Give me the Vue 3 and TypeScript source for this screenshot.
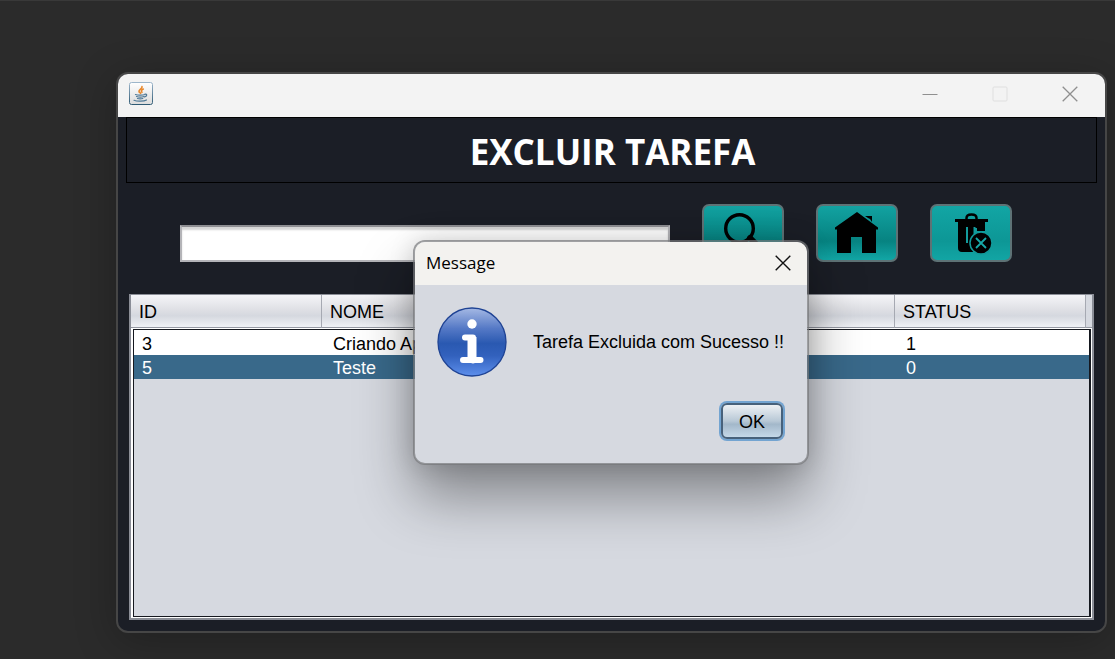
<script setup lang="ts">
import { ref } from 'vue'

interface Task {
  id: number
  nome: string
  status: number
}

const search = ref('')
const selectedId = ref(5)
const columns = ['ID', 'NOME', '', '', 'STATUS']
const tasks: Task[] = [
  { id: 3, nome: 'Criando App', status: 1 },
  { id: 5, nome: 'Teste', status: 0 },
]
</script>

<template>
  <div class="desktop">
    <main class="window">
      <header class="titlebar">
        <svg class="java" viewBox="0 0 24 24" aria-hidden="true">
          <defs>
            <linearGradient id="javaBg" x1="0" y1="0" x2="0" y2="1">
              <stop offset="0" stop-color="#ffffff" />
              <stop offset="1" stop-color="#dcdcdc" />
            </linearGradient>
            <linearGradient id="javaEdge" x1="0" y1="0" x2="0" y2="1">
              <stop offset="0" stop-color="#9db6cb" />
              <stop offset="1" stop-color="#2f5a74" />
            </linearGradient>
          </defs>
          <rect x="0.5" y="0.5" width="23" height="22" rx="2" fill="url(#javaBg)" stroke="url(#javaEdge)" />
          <g fill="none" stroke-linecap="round">
            <path d="M13 4.500c.8 2.200-3.500 3-3 5 .2 1 1.300 1.200 1.600 1.800M14.300 7c-1.500.6-2.600 1.800-1.300 3.200" stroke="#e8872b" stroke-width="1.600" />
            <path d="M6.500 12.500c2 .8 7.500.7 9.500 0M16 12c2.500-.3 2.200 2.300-.5 3M7.500 14.500c2 .6 5.500.6 7.500 0M8.500 16.500c1.500.5 3.800.5 5.300 0M5 18.300c3 1.300 10 1.200 12.500-.3" stroke="#4e7896" stroke-width="1.200" />
          </g>
        </svg>
        <div class="controls">
          <button type="button" aria-label="Minimizar">
            <svg viewBox="0 0 16 16"><path d="M0.500 8.500h15" stroke="#8f8f8f" /></svg>
          </button>
          <button type="button" aria-label="Maximizar" disabled>
            <svg viewBox="0 0 16 16"><rect x="1" y="1" width="14" height="14" rx="1" fill="none" stroke="#dfdfdf" /></svg>
          </button>
          <button type="button" aria-label="Fechar">
            <svg viewBox="0 0 16 16"><path d="M.7.7l14.600 14.600M15.300.7L.7 15.300" stroke="#8f8f8f" stroke-width="1.300" /></svg>
          </button>
        </div>
      </header>

      <h1 class="banner">EXCLUIR TAREFA</h1>

      <section class="toolbar">
        <input v-model="search" class="search" type="text" aria-label="Pesquisar tarefa" />
        <div class="actions">
          <button class="action" type="button" aria-label="Pesquisar">
            <svg viewBox="0 0 44 44">
              <circle cx="18.500" cy="17.500" r="13.800" fill="none" stroke="#000" stroke-width="3.400" />
              <path d="M29 27l11 11" stroke="#000" stroke-width="6" stroke-linecap="round" />
            </svg>
          </button>
          <button class="action" type="button" aria-label="Início">
            <svg viewBox="0 0 44 44">
              <path d="M22 1L43 16.500v2h-2V42H27V26H16v16H2V18.500H0v-2zM30 5h7v6l-2-3-2-1z" />
            </svg>
          </button>
          <button class="action light" type="button" aria-label="Excluir">
            <svg viewBox="0 0 44 44">
              <path d="M6 8h33v3h-3v9h-8v-3h-3v19h-1v5H13q-4 0-4-4V11H6z" />
              <path d="M17.500 9V7q0-3.500 5-3.500t5 3.500v2" fill="none" stroke="#000" stroke-width="2.500" />
              <path d="M18 16v16M25.500 16v7" stroke="#139b9c" stroke-width="2" />
              <circle cx="32" cy="32" r="11" fill="#000" stroke="#119b9b" stroke-width="1.500" />
              <path d="M27 27l10 10M37 27L27 37" stroke="#17a8a8" stroke-width="1.800" />
            </svg>
          </button>
        </div>
      </section>

      <section class="grid">
        <table>
          <thead>
            <tr>
              <th v-for="(c, i) in columns" :key="i" scope="col">{{ c }}</th>
              <th class="corner" aria-hidden="true"></th>
            </tr>
          </thead>
        </table>
        <div class="viewport">
          <table>
            <tbody>
              <tr
                v-for="t in tasks"
                :key="t.id"
                :class="{ selected: t.id === selectedId }"
                @click="selectedId = t.id"
              >
                <td>{{ t.id }}</td>
                <td>{{ t.nome }}</td>
                <td></td>
                <td></td>
                <td>{{ t.status }}</td>
              </tr>
            </tbody>
          </table>
        </div>
      </section>
    </main>

    <section class="dialog" role="dialog" aria-labelledby="dialog-title">
      <header class="dialog-bar">
        <h2 id="dialog-title">Message</h2>
        <button type="button" aria-label="Fechar mensagem">
          <svg viewBox="0 0 16 16"><path d="M.7.7l14.600 14.600M15.300.7L.7 15.300" stroke="#111" stroke-width="1.400" /></svg>
        </button>
      </header>
      <div class="message">
        <svg class="info" viewBox="0 0 70 70" aria-hidden="true">
          <defs>
            <linearGradient id="infoBg" x1="0" y1="0" x2="0" y2="1">
              <stop offset="0" stop-color="#a5b9e4" />
              <stop offset="0.300" stop-color="#5579c6" />
              <stop offset="0.520" stop-color="#2a59b1" />
              <stop offset="0.700" stop-color="#3261bd" />
              <stop offset="1" stop-color="#5d8fec" />
            </linearGradient>
          </defs>
          <circle cx="35" cy="35" r="34" fill="url(#infoBg)" stroke="#1f4394" stroke-width="1.300" />
          <circle cx="35" cy="17" r="4.700" fill="#fff" />
          <path d="M28 30.500h8v23M26 53h17.500" fill="none" stroke="#fff" stroke-width="6" stroke-linecap="round" stroke-linejoin="round" />
          <path d="M30.500 30h9v23h-9z" fill="#fff" />
        </svg>
        <p>Tarefa Excluida com Sucesso !!</p>
      </div>
      <footer class="dialog-actions">
        <button type="button" class="ok">OK</button>
      </footer>
    </section>
  </div>
</template>

<style>
body {
  margin: 0;
  background: #2b2b2b;
}
</style>

<style scoped>
* {
  box-sizing: border-box;
}

.desktop {
  position: relative;
  display: flex;
  min-height: 100vh;
  border-top: 1px solid #393939;
  padding: 71px 8px 26px 116px;
  overflow: hidden;
  background: #2b2b2b;
  color: #000;
  font: 18px/24px "Liberation Sans", Arial, sans-serif;
}

button {
  padding: 0;
  border: 0;
  background: none;
  color: inherit;
  font: inherit;
}

svg {
  display: block;
}

.window {
  display: flex;
  flex: 1;
  flex-direction: column;
  min-width: 0;
  border: 2px solid #464646;
  border-radius: 12px;
  overflow: hidden;
  background: #1b1e26;
  box-shadow: 0 8px 40px rgba(0, 0, 0, 0.25);
}

.titlebar {
  display: flex;
  align-items: center;
  justify-content: space-between;
  height: 43px;
  flex: none;
  padding: 0 27px 3px 11px;
  background: #f3f3f3;
}

.java {
  width: 24px;
  height: 24px;
}

.controls {
  display: flex;
  gap: 54px;
}

.controls svg,
.dialog-bar svg {
  width: 16px;
  height: 16px;
}

.banner {
  flex: none;
  margin: 0 8px;
  border: 1px solid #000;
  padding: 4px 0 0 2px;
  color: #fff;
  font: 700 35px/60px "Open Sans", "Noto Sans", sans-serif;
  text-align: center;
}

.toolbar {
  display: flex;
  align-items: flex-start;
  gap: 32px;
  padding: 21px 93px 32px 62px;
}

.search {
  flex: 1;
  min-width: 0;
  height: 37px;
  margin-top: 21px;
  border: 2px solid #b4b4b8;
  border-top-color: #8e8e92;
  border-radius: 0;
  padding: 0 8px;
  background: #fff;
  box-shadow: inset 0 3px 2px #d5d5d5;
  font: inherit;
  outline: none;
}

.actions {
  display: flex;
  gap: 32px;
}

.action {
  display: flex;
  justify-content: center;
  width: 82px;
  height: 58px;
  border: 2px solid #5e7275;
  border-radius: 7px;
  padding-top: 5px;
  background: linear-gradient(#12a2a1, #078381 65%, #0b908f 78%, #12a6a5);
}

.action.light {
  background: linear-gradient(#12a5a4, #0d9796 65%, #12a5a4);
}

.action svg {
  width: 44px;
  height: 44px;
}

.grid {
  display: flex;
  flex: 1;
  flex-direction: column;
  margin: 0 11px 11px;
  border: 2px solid #8b8e97;
  border-top-width: 1px;
  background: #fff;
}

table {
  width: 100%;
  border-collapse: separate;
  border-spacing: 0;
  table-layout: fixed;
}

th {
  height: 33px;
  border-right: 1px solid #a6a9b2;
  border-bottom: 1px solid #9498a2;
  padding: 1px 8px 0;
  background: linear-gradient(#f5f5f8, #dfe0e5 45%, #d5d8df 65%, #eff1f5);
  font-weight: 400;
  text-align: left;
}

.corner {
  width: 6px;
  border-right: 0;
  padding: 0;
  background: #d6d9e0;
}

.viewport {
  flex: 1;
  margin: 1px 1px 1px 2px;
  border: 1px solid #15181f;
  border-right-width: 2px;
  background: #d6d9e0;
}

.viewport tr {
  background: #fff;
}

.viewport tr.selected {
  background: #39698a;
  color: #fff;
}

td {
  height: 24px;
  padding: 2px 8px 0;
  line-height: 22px;
  overflow: hidden;
  white-space: nowrap;
}

.viewport tr:first-child td {
  height: 25px;
  padding-top: 3px;
}

.dialog {
  position: absolute;
  top: 239px;
  left: 413px;
  width: 396px;
  border: 2px solid rgba(118, 119, 123, 0.7);
  border-radius: 12px;
  background: #d6d9e0;
  background-clip: padding-box;
  box-shadow: 0 32px 56px rgba(0, 0, 0, 0.38), 0 0 24px rgba(0, 0, 0, 0.15);
}

.dialog-bar {
  display: flex;
  align-items: center;
  justify-content: space-between;
  height: 43px;
  border-radius: 10px 10px 0 0;
  padding: 0 16px 2px 11px;
  background: #f3f2ef;
}

.dialog-bar h2 {
  margin: 0;
  font: 400 17px/24px "Open Sans", "Noto Sans", sans-serif;
}

.message {
  display: flex;
  align-items: center;
  gap: 26px;
  padding: 22px 20px 0 22px;
}

.info {
  flex: none;
  width: 70px;
  height: 70px;
}

.message p {
  margin: 0;
  white-space: nowrap;
}

.dialog-actions {
  display: flex;
  justify-content: flex-end;
  padding: 26px 24px 24px;
}

.ok {
  width: 62px;
  height: 36px;
  border: 2px solid #47617b;
  border-radius: 6px;
  padding-top: 2px;
  background: linear-gradient(#edf0f4, #b8c8d6 50%, #a3b8ca 60%, #c4d8e8);
  box-shadow: 0 0 0 2px #73a4d1;
}
</style>
